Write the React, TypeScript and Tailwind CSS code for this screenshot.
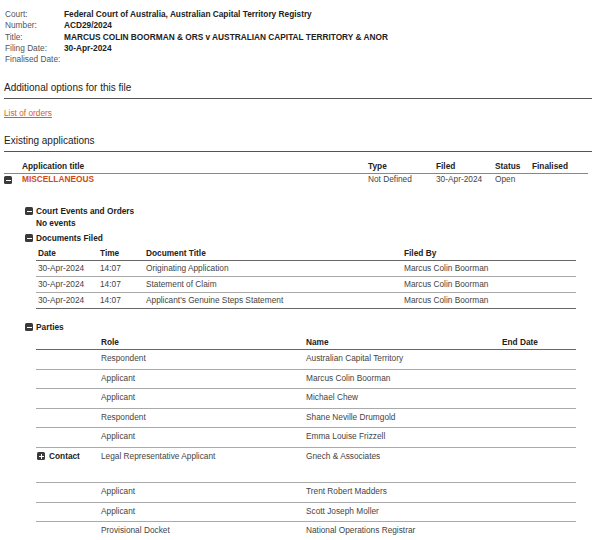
import React from 'react';

const orange = 'text-[#d04a17]';

function Toggle({ plus }: { plus?: boolean }) {
  return (
    <span className="relative inline-block w-[8px] h-[8px] rounded-[1.5px] bg-[#3a3a3a] align-middle shrink-0">
      <span className="absolute left-[1.5px] right-[1.5px] top-[3.5px] h-[1px] bg-white" />
      {plus && <span className="absolute top-[1.5px] bottom-[1.5px] left-[3.5px] w-[1px] bg-white" />}
    </span>
  );
}

const info = [
  ['Court:', 'Federal Court of Australia, Australian Capital Territory Registry'],
  ['Number:', 'ACD29/2024'],
  ['Title:', 'MARCUS COLIN BOORMAN & ORS v AUSTRALIAN CAPITAL TERRITORY & ANOR'],
  ['Filing Date:', '30-Apr-2024'],
  ['Finalised Date:', ''],
];

const docs = [
  ['30-Apr-2024', '14:07', 'Originating Application', 'Marcus Colin Boorman'],
  ['30-Apr-2024', '14:07', 'Statement of Claim', 'Marcus Colin Boorman'],
  ['30-Apr-2024', '14:07', "Applicant's Genuine Steps Statement", 'Marcus Colin Boorman'],
];

const parties: { role: string; name: string; contact?: boolean }[] = [
  { role: 'Respondent', name: 'Australian Capital Territory' },
  { role: 'Applicant', name: 'Marcus Colin Boorman' },
  { role: 'Applicant', name: 'Michael Chew' },
  { role: 'Respondent', name: 'Shane Neville Drumgold' },
  { role: 'Applicant', name: 'Emma Louise Frizzell' },
  { role: 'Legal Representative Applicant', name: 'Gnech & Associates', contact: true },
  { role: 'Applicant', name: 'Trent Robert Madders' },
  { role: 'Applicant', name: 'Scott Joseph Moller' },
  { role: 'Provisional Docket', name: 'National Operations Registrar' },
];

export default function App() {
  return (
    <div className="w-[602px] h-[540px] overflow-hidden bg-white text-[8.3px] text-[#444] font-['Liberation_Sans',Arial,sans-serif]">
      {/* File details */}
      <div className="pt-[9px] pl-[5px] grid grid-cols-[59px_1fr] leading-[11.25px]">
        {info.map(([label, value]) => (
          <React.Fragment key={label}>
            <div className="text-[#555] whitespace-nowrap">{label}</div>
            <div className="font-bold text-[#222] min-h-[11.25px]">{value}</div>
          </React.Fragment>
        ))}
      </div>

      {/* Additional options */}
      <div className="mt-[16px] mx-[4px] mr-[10px] border-b-[1.5px] border-[#555] pb-[3px]">
        <h2 className="text-[10px] leading-[14px] text-[#222]">Additional options for this file</h2>
      </div>
      <div className="pl-[4px] mt-[9px] leading-[11px]">
        <a className="text-[#de5a2c] underline">List of orders</a>
      </div>

      {/* Existing applications */}
      <div className="mt-[15px] mx-[4px] mr-[10px] border-b-[1.5px] border-[#555] pb-[3px]">
        <h2 className="text-[10px] leading-[14px] text-[#222]">Existing applications</h2>
      </div>

      <table className="mt-[9px] ml-[4px] w-[584px] border-collapse table-fixed">
        <colgroup>
          <col className="w-[18px]" />
          <col className="w-[346px]" />
          <col className="w-[68px]" />
          <col className="w-[59px]" />
          <col className="w-[37px]" />
          <col />
        </colgroup>
        <thead>
          <tr className="border-b border-[#888] text-left text-[#222] font-bold leading-[11px]">
            <th className="pb-[1px]" />
            <th className="pb-[1px]">Application title</th>
            <th className="pb-[1px]">Type</th>
            <th className="pb-[1px]">Filed</th>
            <th className="pb-[1px]">Status</th>
            <th className="pb-[1px]">Finalised</th>
          </tr>
        </thead>
        <tbody>
          <tr className="leading-[11px]">
            <td><Toggle /></td>
            <td className={`font-bold ${orange}`}>MISCELLANEOUS</td>
            <td>Not Defined</td>
            <td>30-Apr-2024</td>
            <td>Open</td>
            <td />
          </tr>
        </tbody>
      </table>

      {/* Application details */}
      <div className="ml-[25px] mt-[20px] w-[551px]">
        <div className="flex items-center gap-[3px] font-bold text-[#222] leading-[12px]">
          <Toggle />
          <span>Court Events and Orders</span>
        </div>
        <div className="pl-[11px] font-bold text-[#222] leading-[12px]">No events</div>

        <div className="mt-[3px] flex items-center gap-[3px] font-bold text-[#222] leading-[12px]">
          <Toggle />
          <span>Documents Filed</span>
        </div>

        <table className="ml-[11px] mt-[4px] w-[540px] border-collapse table-fixed">
          <colgroup>
            <col className="w-[64px]" />
            <col className="w-[46px]" />
            <col className="w-[258px]" />
            <col />
          </colgroup>
          <thead>
            <tr className="border-b-[1.5px] border-[#666] text-left text-[#222] font-bold leading-[11px]">
              <th className="pl-[2px] pb-[1px]">Date</th>
              <th className="pb-[1px]">Time</th>
              <th className="pb-[1px]">Document Title</th>
              <th className="pb-[1px]">Filed By</th>
            </tr>
          </thead>
          <tbody>
            {docs.map((d, i) => (
              <tr
                key={i}
                className={`leading-[15px] ${i === docs.length - 1 ? 'border-b-[1.5px] border-[#666]' : 'border-b border-[#aaa]'}`}
              >
                <td className="pl-[2px]">{d[0]}</td>
                <td>{d[1]}</td>
                <td>{d[2]}</td>
                <td>{d[3]}</td>
              </tr>
            ))}
          </tbody>
        </table>

        <div className="mt-[12px] flex items-center gap-[3px] font-bold text-[#222] leading-[12px]">
          <Toggle />
          <span>Parties</span>
        </div>

        <table className="ml-[11px] mt-[4px] w-[540px] border-collapse table-fixed">
          <colgroup>
            <col className="w-[65px]" />
            <col className="w-[205px]" />
            <col className="w-[196px]" />
            <col />
          </colgroup>
          <thead>
            <tr className="border-b-[1.5px] border-[#666] text-left text-[#222] font-bold leading-[11px]">
              <th className="pb-[1px]" />
              <th className="pb-[1px]">Role</th>
              <th className="pb-[1px]">Name</th>
              <th className="pb-[1px]">End Date</th>
            </tr>
          </thead>
          <tbody>
            {parties.map((p, i) => (
              <tr key={i} className="border-b border-[#aaa] align-top leading-[11px]">
                <td className={p.contact ? 'pt-[3px] pb-[20.5px]' : 'pt-[3px] pb-[4.5px]'}>
                  {p.contact && (
                    <span className="flex items-center gap-[4px] pl-[1px] font-bold text-[#222]">
                      <Toggle plus />
                      Contact
                    </span>
                  )}
                </td>
                <td className="pt-[3px] pb-[4.5px]">{p.role}</td>
                <td className="pt-[3px] pb-[4.5px]">{p.name}</td>
                <td />
              </tr>
            ))}
          </tbody>
        </table>
      </div>
    </div>
  );
}
